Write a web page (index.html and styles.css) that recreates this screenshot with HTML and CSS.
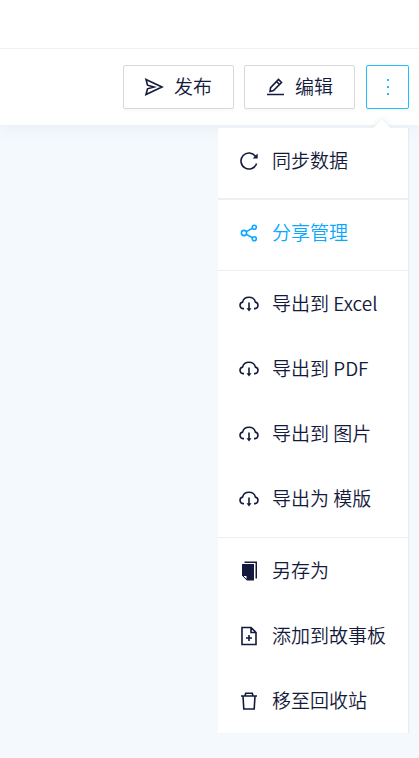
FILE: index.html
```html
<!DOCTYPE html>
<html lang="zh-CN">
<head>
<meta charset="utf-8">
<meta name="viewport" content="width=device-width, initial-scale=1">
<title>发布</title>
<link rel="stylesheet" href="styles.css">
</head>
<body>
<svg class="defs" aria-hidden="true">
  <symbol id="cloud" viewBox="0 0 20 20">
    <path d="M5 14.6H4A3.3 3.3 0 0 1 3.6 8.100C4.300 5.200 6.800 3.300 10 3.300s5.700 1.900 6.400 4.800a3.300 3.300 0 0 1-.4 6.500h-1M10 8.500v7"/>
    <path class="solid" d="M7.500 14.300h5L10 17.500z"/>
  </symbol>
</svg>
<header class="topbar"></header>
<div class="toolbar">
  <button class="btn" type="button">
    <svg class="icon" viewBox="0 0 20 20"><path d="M2 2.500l16 7.500L2 17.500l1.500-5.700L10 10 3.500 8.200z"/></svg>
    <span>发布</span>
  </button>
  <button class="btn" type="button">
    <svg class="icon" viewBox="0 0 20 20"><path d="M2 17.500h17M5 14.500l.6-3.800L13.500 2.500l3 3-8 8zM11.500 4.500l3 3"/></svg>
    <span>编辑</span>
  </button>
  <div class="more">
    <button class="btn btn-more" type="button" aria-label="更多" aria-expanded="true">
      <svg class="icon dots" viewBox="0 0 20 20"><path class="solid" d="M9 2h2v2H9zM9 9h2v2H9zM9 16h2v2H9z"/></svg>
    </button>
    <div class="menu">
      <div class="group group-first">
        <button class="item" type="button"><svg class="icon" viewBox="0 0 20 20"><path d="M16.600 5.500A8 8 0 1 0 17.600 12.500"/><path class="solid" d="M18.700 2.500v5h-5z"/></svg><span>同步数据</span></button>
      </div>
      <div class="group">
        <button class="item active" type="button"><svg class="icon" viewBox="0 0 20 20"><circle cx="5" cy="10" r="2.600"/><circle cx="15.300" cy="4.300" r="2"/><circle cx="15.300" cy="15.700" r="2"/><path d="M7.400 8.600l6-3.300M7.400 11.400l6 3.300"/></svg><span>分享管理</span></button>
      </div>
      <div class="group group-export">
        <button class="item" type="button"><svg class="icon"><use href="#cloud"/></svg><span>导出到 Excel</span></button>
        <button class="item" type="button"><svg class="icon"><use href="#cloud"/></svg><span>导出到 PDF</span></button>
        <button class="item" type="button"><svg class="icon"><use href="#cloud"/></svg><span>导出到 图片</span></button>
        <button class="item" type="button"><svg class="icon"><use href="#cloud"/></svg><span>导出为 模版</span></button>
      </div>
      <div class="group group-last">
        <button class="item" type="button"><svg class="icon" viewBox="0 0 20 20"><path class="solid" d="M3 3h12v16.500H8L3 14.500z"/><path class="solid" d="M5.500 .5H18V17.500H16.500V2H5.500z"/><path class="fold" d="M3.500 14.500H8V19z"/></svg><span>另存为</span></button>
        <button class="item" type="button"><svg class="icon" viewBox="0 0 20 20"><path d="M3 1.500h9l5 5v12H3zM12 1.500v5h5M10 9v6M7 12h6"/></svg><span>添加到故事板</span></button>
        <button class="item" type="button"><svg class="icon" viewBox="0 0 20 20"><path d="M2 5h16M6 5l.7-2.700h6.600L14 5M4 5l.8 13h10.400L16 5"/></svg><span>移至回收站</span></button>
      </div>
    </div>
  </div>
</div>
</body>
</html>
```
FILE: styles.css
```css
* {
  box-sizing: border-box;
}

body {
  margin: 0;
  min-height: 100vh;
  background: #f3f9fd;
  color: #141a3c;
  font-family: "Noto Sans CJK SC", sans-serif;
  font-size: 19px;
  font-weight: 350;
  line-height: 26px;
}

.defs {
  position: absolute;
  width: 0;
  height: 0;
}

.topbar {
  position: relative;
  z-index: 1;
  height: 49px;
  background: #fff;
  border-bottom: 1px solid #edf0f4;
}

.toolbar {
  display: flex;
  justify-content: flex-end;
  gap: 10px;
  padding: 16px 10px;
  background: #fff;
  box-shadow: 0 2px 16px #e6edf3;
}

button {
  font: inherit;
  color: inherit;
  cursor: pointer;
}

.btn {
  display: flex;
  align-items: center;
  gap: 10px;
  min-width: 111px;
  height: 44px;
  padding: 0 20px;
  background: #fff;
  border: 1px solid #d9d9d9;
  border-radius: 2px;
  box-shadow: 0 2px 2px #f9f9f9;
}

.btn-more {
  justify-content: center;
  min-width: 43px;
  padding: 0;
  border-color: #1fbfff;
  color: #1fbfff;
}

.icon {
  flex: none;
  width: 20px;
  height: 20px;
  fill: none;
  stroke: currentColor;
  stroke-width: 1.6;
}

.dots {
  shape-rendering: crispEdges;
}

.solid {
  fill: currentColor;
  stroke: none;
}

.fold {
  fill: #fff;
  stroke: currentColor;
  stroke-width: 1;
}

.more {
  position: relative;
  margin-left: 1px;
}

.menu {
  position: absolute;
  top: 63px;
  right: 1px;
  width: 190px;
  background: #fff;
  box-shadow: 1px 0 1px #e8ebee;
}

.menu::before {
  content: "";
  position: absolute;
  top: -6px;
  right: 20px;
  width: 12px;
  height: 12px;
  background: #fff;
  transform: rotate(45deg);
  box-shadow: -1px -1px 6px #e9ecef;
  clip-path: polygon(-8px -8px, 20px -8px, -8px 20px);
}

.group {
  padding-bottom: 5px;
  border-bottom: 1px solid #efefef;
}

.group-first {
  border-bottom-width: 2px;
}

.group-export {
  padding-bottom: 6px;
}

.group-last {
  padding-bottom: 0;
  border-bottom: 0;
}

.item {
  display: flex;
  align-items: center;
  gap: 13px;
  width: 100%;
  height: 65px;
  padding: 0 21px;
  border: 0;
  background: none;
  white-space: nowrap;
}

.item span,
.btn span {
  padding-bottom: 2px;
}

.active {
  color: #08a8ff;
}
```
